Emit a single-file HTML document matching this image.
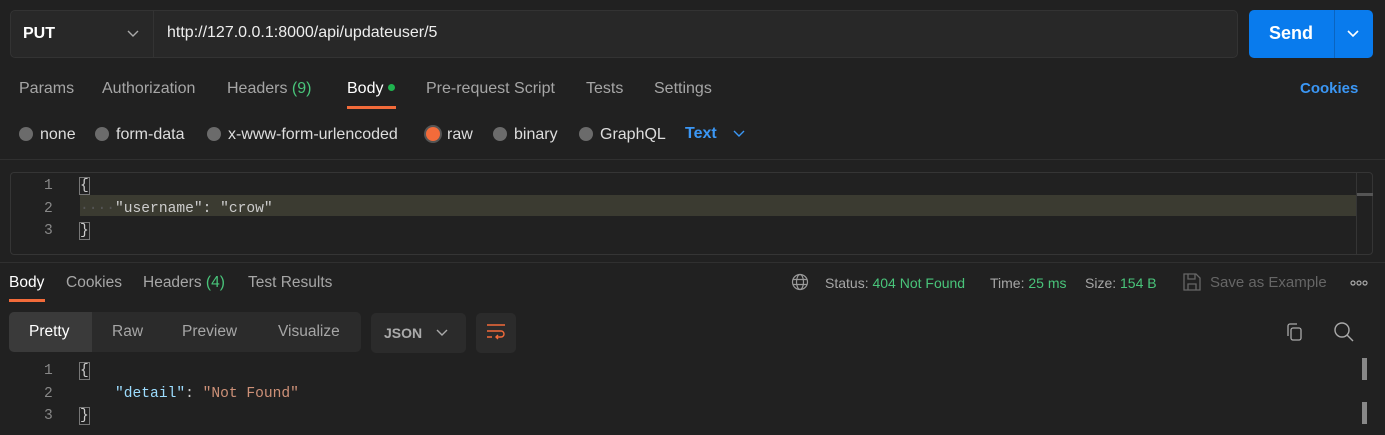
<html><head><style>
body{margin:0;width:1385px;height:435px;background:#212121;font-family:"Liberation Sans",sans-serif;font-size:14px;color:#a6a6a6;position:relative;overflow:hidden}
.a{position:absolute;white-space:nowrap}
.t{font-size:16px}
.mono{font-family:"Liberation Mono",monospace;font-size:14.6px}
.g{color:#49c47a}
.r{width:14px;height:14px;border-radius:50%;background:#6b6b6b;display:inline-block;vertical-align:-2px;margin-right:7px}
</style></head><body>
<div class="a" style="left:10px;top:10px;width:1228px;height:48px;background:#282828;border:1px solid #333;border-radius:5px;box-sizing:border-box"></div>
<div class="a" style="left:153px;top:10px;width:1px;height:48px;background:#333"></div>
<div class="a" style="left:23px;top:25px;color:#fff;font-weight:bold;font-size:16px">PUT</div>
<svg class="a" style="left:127px;top:29px" width="12" height="10"><path d="M1 2l5 5 5-5" stroke="#aaa" fill="none" stroke-width="1.4"/></svg>
<div class="a" style="left:167px;top:24px;color:#eee;font-size:16px">http://127.0.0.1:8000/api/updateuser/5</div>
<div class="a" style="left:1249px;top:10px;width:124px;height:48px;background:#097bed;border-radius:5px"></div>
<div class="a" style="left:1334px;top:10px;width:1px;height:48px;background:#0a64c0"></div>
<div class="a" style="left:1269px;top:23px;color:#fff;font-weight:bold;font-size:18px">Send</div>
<svg class="a" style="left:1347px;top:29px" width="12" height="10"><path d="M1 2l5 5 5-5" stroke="#fff" fill="none" stroke-width="1.6"/></svg>

<div class="a t" style="left:19px;top:80px">Params</div>
<div class="a t" style="left:102px;top:80px">Authorization</div>
<div class="a t" style="left:227px;top:80px">Headers <span class="g">(9)</span></div>
<div class="a t" style="left:347px;top:80px;color:#fff">Body <span style="display:inline-block;width:7px;height:7px;border-radius:50%;background:#1fb34f;vertical-align:2px"></span></div>
<div class="a" style="left:347px;top:106px;width:49px;height:3px;background:#f26b3a"></div>
<div class="a t" style="left:426px;top:80px">Pre-request Script</div>
<div class="a t" style="left:586px;top:80px">Tests</div>
<div class="a t" style="left:654px;top:80px">Settings</div>
<div class="a t" style="left:1300px;top:80px;color:#3b97f5;font-weight:bold;font-size:15px">Cookies</div>

<div class="a t" style="left:19px;top:126px;color:#ddd"><span class="r"></span>none</div>
<div class="a t" style="left:95px;top:126px;color:#ddd"><span class="r"></span>form-data</div>
<div class="a t" style="left:207px;top:126px;color:#ddd"><span class="r"></span>x-www-form-urlencoded</div>
<div class="a t" style="left:426px;top:126px;color:#ddd"><span class="r" style="background:#f26b3a;box-shadow:0 0 0 2px #555"></span>raw</div>
<div class="a t" style="left:493px;top:126px;color:#ddd"><span class="r"></span>binary</div>
<div class="a t" style="left:579px;top:126px;color:#ddd"><span class="r"></span>GraphQL</div>
<div class="a" style="left:685px;top:125px;color:#3b97f5;font-size:16px;font-weight:bold">Text</div>
<svg class="a" style="left:733px;top:129px" width="12" height="10"><path d="M1 2l5 5 5-5" stroke="#3b97f5" fill="none" stroke-width="1.4"/></svg>
<div class="a" style="left:0;top:159px;width:1385px;height:1px;background:#303030"></div>

<div class="a" style="left:10px;top:172px;width:1363px;height:83px;border:1px solid #353535;border-radius:4px;box-sizing:border-box"></div>
<div class="a" style="left:80px;top:195px;width:1277px;height:21px;background:#3b3b31"></div>
<div class="a" style="left:1356px;top:173px;width:1px;height:81px;background:#353535"></div>
<div class="a" style="left:1357px;top:193px;width:16px;height:3px;background:#555"></div>
<div class="a mono" style="left:44px;top:175px;color:#888;line-height:22.5px">1<br>2<br>3</div>
<div class="a mono" style="left:80px;top:175px;color:#ccc;line-height:22.5px"><span style="outline:1px solid #777">{</span><br><span style="color:#555">····</span>"username": "crow"<br><span style="outline:1px solid #777">}</span></div>
<div class="a" style="left:0;top:262px;width:1385px;height:1px;background:#303030"></div>

<div class="a" style="left:9px;top:274px;font-size:15.5px;color:#fff">Body</div>
<div class="a" style="left:9px;top:299px;width:36px;height:3px;background:#f26b3a"></div>
<div class="a" style="left:66px;top:274px;font-size:15.5px">Cookies</div>
<div class="a" style="left:143px;top:274px;font-size:15.5px">Headers <span class="g">(4)</span></div>
<div class="a" style="left:248px;top:274px;font-size:15.5px">Test Results</div>
<svg class="a" style="left:791px;top:273px" width="18" height="18" fill="none" stroke="#999" stroke-width="1.2"><circle cx="9" cy="9" r="7.5"/><ellipse cx="9" cy="9" rx="3.5" ry="7.5"/><path d="M2 6.5h14M2 11.5h14"/></svg>
<div class="a" style="left:825px;top:275px">Status: <span class="g">404 Not Found</span></div>
<div class="a" style="left:990px;top:275px">Time: <span class="g">25 ms</span></div>
<div class="a" style="left:1085px;top:275px">Size: <span class="g">154 B</span></div>
<svg class="a" style="left:1182px;top:272px" width="20" height="20" fill="none" stroke="#666" stroke-width="1.3"><path d="M2 2h12l4 4v12H2z M6 2v5h7V2 M6 18v-6h8v6"/></svg>
<div class="a" style="left:1210px;top:274px;font-size:15px;color:#666">Save as Example</div>
<svg class="a" style="left:1350px;top:279px" width="18" height="8" fill="none" stroke="#aaa" stroke-width="1.2"><circle cx="3" cy="4" r="2"/><circle cx="9" cy="4" r="2"/><circle cx="15" cy="4" r="2"/></svg>

<div class="a" style="left:9px;top:312px;width:352px;height:40px;background:#2b2b2b;border-radius:5px"></div>
<div class="a" style="left:9px;top:312px;width:83px;height:40px;background:#3a3a3a;border-radius:5px 0 0 5px"></div>
<div class="a" style="left:29px;top:323px;font-size:15.5px;color:#fff">Pretty</div>
<div class="a" style="left:112px;top:323px;font-size:15.5px">Raw</div>
<div class="a" style="left:182px;top:323px;font-size:15.5px">Preview</div>
<div class="a" style="left:278px;top:323px;font-size:15.5px">Visualize</div>
<div class="a" style="left:371px;top:313px;width:95px;height:40px;background:#2b2b2b;border-radius:5px"></div>
<div class="a" style="left:384px;top:325px;font-weight:bold;color:#aaa">JSON</div>
<svg class="a" style="left:436px;top:328px" width="12" height="10"><path d="M1 2l5 5 5-5" stroke="#aaa" fill="none" stroke-width="1.4"/></svg>
<div class="a" style="left:476px;top:313px;width:40px;height:40px;background:#2b2b2b;border-radius:5px"></div>
<svg class="a" style="left:486px;top:323px" width="22" height="20" fill="none" stroke="#f26b3a" stroke-width="1.4"><path d="M1 2h18M1 8h14a3 3 0 0 1 0 6h-5M12 12l-2 2 2 2M1 14h5"/></svg>
<svg class="a" style="left:1284px;top:322px" width="20" height="20" fill="none" stroke="#aaa" stroke-width="1.3"><rect x="7" y="6" width="10" height="12" rx="2"/><path d="M4 14V4a2 2 0 0 1 2-2h7"/></svg>
<svg class="a" style="left:1333px;top:321px" width="22" height="22" fill="none" stroke="#aaa" stroke-width="1.4"><circle cx="9" cy="9" r="7"/><path d="M14 14l6 6"/></svg>
<div class="a" style="left:1362px;top:358px;width:5px;height:22px;background:#888"></div>
<div class="a" style="left:1362px;top:402px;width:5px;height:22px;background:#888"></div>
<div class="a mono" style="left:44px;top:360px;color:#888;line-height:22.5px">1<br>2<br>3</div>
<div class="a mono" style="left:80px;top:360px;color:#ccc;line-height:22.5px"><span style="outline:1px solid #777">{</span><br>&nbsp;&nbsp;&nbsp;&nbsp;<span style="color:#9cdcfe">"detail"</span>: <span style="color:#ce9178">"Not Found"</span><br><span style="outline:1px solid #777">}</span></div>
</body></html>
